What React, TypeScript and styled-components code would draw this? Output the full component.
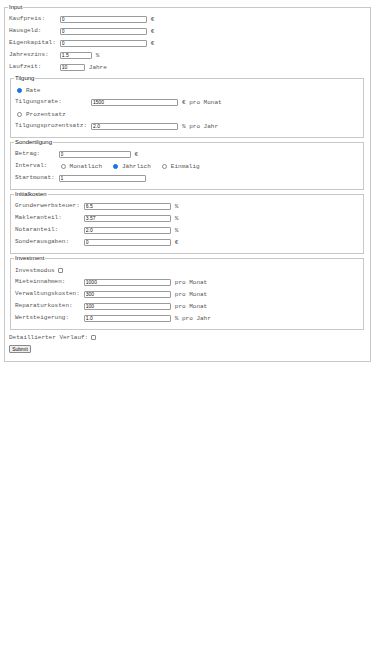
import React from "react";
import styled, { createGlobalStyle } from "styled-components";

const GlobalStyle = createGlobalStyle`
    body {
        margin: 3px 4px 2px;
        background: #fff;
        font-family: "Liberation Mono", monospace;
        font-size: 6px;
        color: #555;
    }
`;

const Fieldset = styled.fieldset<{ $inner?: boolean; $top?: number }>`
    margin: ${(p) => (p.$inner ? `${p.$top ?? 0}px 2px 0 1px` : "0")};
    padding: ${(p) => (p.$inner ? "2px 4px 5px" : "2px 4px 8px")};
    border: 1px solid #c8c8c8;
    min-width: 0;
`;

const Legend = styled.legend`
    padding: 0 1px;
    margin-left: -1px;
    font-family: "Liberation Sans", Arial, sans-serif;
    font-size: 6px;
    line-height: 8px;
    color: #222;
`;

const FieldGrid = styled.div`
    display: grid;
    grid-template-columns: max-content 1fr;
    grid-auto-rows: 12px;
    column-gap: 4px;
    align-items: center;
`;

const Label = styled.span`
    white-space: pre;
    line-height: 12px;
`;

const Cell = styled.div`
    display: flex;
    align-items: center;
    gap: 4px;
    white-space: pre;
`;

const FullRow = styled(Cell)`
    grid-column: 1 / -1;
    gap: 0;
`;

const TextInput = styled.input<{ $w: number }>`
    box-sizing: border-box;
    width: ${(p) => p.$w}px;
    height: 7px;
    margin: 0;
    padding: 0 1px;
    border: 1px solid #9a9a9a;
    border-radius: 1px;
    font-family: "Liberation Sans", Arial, sans-serif;
    font-size: 5px;
    line-height: 5px;
    color: #111;
    background: #fff;
`;

const Unit = styled.span`
    white-space: pre;
`;

const Radio = styled.input.attrs({ type: "radio" })`
    appearance: none;
    box-sizing: border-box;
    width: 5px;
    height: 5px;
    margin: 0 4px 0 2px;
    border: 1px solid #8a8a8a;
    border-radius: 50%;
    background: #fff;

    &:checked {
        border-color: #1a73e8;
        background: #1a73e8;
    }
`;

const Options = styled.div`
    display: flex;
    align-items: center;
    gap: 9px;
`;

const Option = styled.label`
    display: flex;
    align-items: center;
    white-space: pre;
`;

const Checkbox = styled.input.attrs({ type: "checkbox" })`
    appearance: none;
    box-sizing: border-box;
    width: 5px;
    height: 5px;
    margin: 0 0 0 3px;
    border: 1px solid #8a8a8a;
    border-radius: 1px;
    background: #fff;
`;

const CheckRow = styled.div<{ $top?: number }>`
    display: flex;
    align-items: center;
    height: 12px;
    margin-top: ${(p) => p.$top ?? 0}px;
    white-space: pre;
`;

const SubmitButton = styled.button`
    display: block;
    box-sizing: border-box;
    margin-top: 2px;
    height: 8px;
    width: 22px;
    padding: 0;
    border: 1px solid #8a8a8a;
    border-radius: 1px;
    background: #efefef;
    font-family: "Liberation Sans", Arial, sans-serif;
    font-size: 5px;
    line-height: 6px;
    color: #111;
`;

type Field = { label: string; value: string; width: number; unit?: string };

function Rows({ fields }: { fields: Field[] }) {
    return (
        <>
            {fields.map((f) => (
                <React.Fragment key={f.label}>
                    <Label>{f.label}</Label>
                    <Cell>
                        <TextInput $w={f.width} defaultValue={f.value} />
                        {f.unit && <Unit>{f.unit}</Unit>}
                    </Cell>
                </React.Fragment>
            ))}
        </>
    );
}

const basics: Field[] = [
    { label: "Kaufpreis:", value: "0", width: 87, unit: "€" },
    { label: "Hausgeld:", value: "0", width: 87, unit: "€" },
    { label: "Eigenkapital:", value: "0", width: 87, unit: "€" },
    { label: "Jahreszins:", value: "1.5", width: 32, unit: "%" },
    { label: "Laufzeit:", value: "10", width: 25, unit: "Jahre" },
];

const initial: Field[] = [
    { label: "Grunderwerbsteuer:", value: "6.5", width: 87, unit: "%" },
    { label: "Makleranteil:", value: "3.57", width: 87, unit: "%" },
    { label: "Notaranteil:", value: "2.0", width: 87, unit: "%" },
    { label: "Sonderausgaben:", value: "0", width: 87, unit: "€" },
];

const invest: Field[] = [
    { label: "Mieteinnahmen:", value: "1000", width: 87, unit: "pro Monat" },
    { label: "Verwaltungskosten:", value: "300", width: 87, unit: "pro Monat" },
    { label: "Reparaturkosten:", value: "100", width: 87, unit: "pro Monat" },
    { label: "Wertsteigerung:", value: "1.0", width: 87, unit: "% pro Jahr" },
];

export default function App() {
    return (
        <>
            <GlobalStyle />
            <form onSubmit={(e) => e.preventDefault()}>
                <Fieldset>
                    <Legend>Input</Legend>
                    <FieldGrid>
                        <Rows fields={basics} />
                    </FieldGrid>

                    <Fieldset $inner $top={1}>
                        <Legend>Tilgung</Legend>
                        <FieldGrid>
                            <FullRow>
                                <Radio name="tilgung" defaultChecked />
                                Rate
                            </FullRow>
                            <Rows fields={[{ label: "Tilgungsrate:", value: "1500", width: 87, unit: "€ pro Monat" }]} />
                            <FullRow>
                                <Radio name="tilgung" />
                                Prozentsatz
                            </FullRow>
                            <Rows fields={[{ label: "Tilgungsprozentsatz:", value: "2.0", width: 87, unit: "% pro Jahr" }]} />
                        </FieldGrid>
                    </Fieldset>

                    <Fieldset $inner>
                        <Legend>Sondertilgung</Legend>
                        <FieldGrid>
                            <Rows fields={[{ label: "Betrag:", value: "0", width: 72, unit: "€" }]} />
                            <Label>Interval:</Label>
                            <Options>
                                <Option>
                                    <Radio name="interval" />
                                    Monatlich
                                </Option>
                                <Option>
                                    <Radio name="interval" defaultChecked />
                                    Jährlich
                                </Option>
                                <Option>
                                    <Radio name="interval" />
                                    Einmalig
                                </Option>
                            </Options>
                            <Rows fields={[{ label: "Startmonat:", value: "1", width: 87 }]} />
                        </FieldGrid>
                    </Fieldset>

                    <Fieldset $inner>
                        <Legend>Initialkosten</Legend>
                        <FieldGrid>
                            <Rows fields={initial} />
                        </FieldGrid>
                    </Fieldset>

                    <Fieldset $inner>
                        <Legend>Investment</Legend>
                        <CheckRow>
                            Investmodus
                            <Checkbox />
                        </CheckRow>
                        <FieldGrid>
                            <Rows fields={invest} />
                        </FieldGrid>
                    </Fieldset>

                    <CheckRow $top={1}>
                        Detaillierter Verlauf:
                        <Checkbox />
                    </CheckRow>
                    <SubmitButton type="submit">Submit</SubmitButton>
                </Fieldset>
            </form>
        </>
    );
}
